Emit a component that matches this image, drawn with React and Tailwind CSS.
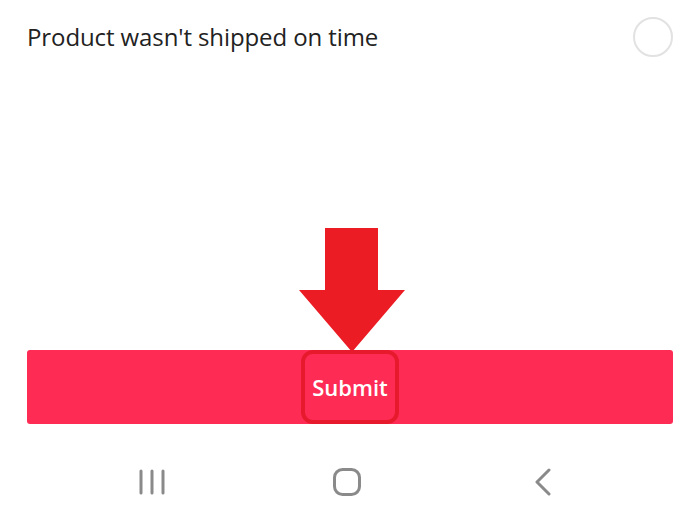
export default function App() {
  return (
    <div className="h-[525px] w-[700px] bg-white flex flex-col font-['Open_Sans',sans-serif]">
      <div className="flex items-center justify-between pl-[27px] pr-[27px] pt-[17px]">
        <span className="text-[24px] leading-[40px] text-[#222222] tracking-[-0.1px]">
          Product wasn't shipped on time
        </span>
        <span className="h-[40px] w-[40px] rounded-full border-2 border-[#e2e2e2]" />
      </div>

      <div className="flex-1 flex items-end justify-center">
        <svg width="106" height="124" viewBox="0 0 106 124" className="ml-[4px] -mb-[2px]">
          <polygon points="26,0 79,0 79,62 106,62 53,124 0,62 26,62" fill="#ec1c24" />
        </svg>
      </div>

      <div className="mx-[27px] h-[74px] rounded-[3px] bg-[#fe2c55] flex items-center justify-center">
        <span className="h-[74px] w-[98px] rounded-[12px] border-[4px] border-[#e61a2c] flex items-center justify-center text-[22px] font-semibold text-white">
          Submit
        </span>
      </div>

      <div className="h-[101px] flex items-start justify-between pl-[139px] pr-[148px] pt-[44px]">
        <svg width="26" height="26" viewBox="0 0 26 26" className="mt-[1px]">
          <g stroke="#8a8a8a" strokeWidth="3" strokeLinecap="round">
            <line x1="2" y1="2" x2="2" y2="24" />
            <line x1="13" y1="2" x2="13" y2="24" />
            <line x1="24" y1="2" x2="24" y2="24" />
          </g>
        </svg>
        <svg width="28" height="28" viewBox="0 0 28 28" className="mr-[5px]">
          <rect x="1.5" y="1.5" width="25" height="25" rx="8" fill="none" stroke="#8a8a8a" strokeWidth="3" />
        </svg>
        <svg width="18" height="28" viewBox="0 0 18 28">
          <polyline points="15,2 3,14 15,26" fill="none" stroke="#8a8a8a" strokeWidth="3" strokeLinecap="round" strokeLinejoin="round" />
        </svg>
      </div>
    </div>
  );
}
